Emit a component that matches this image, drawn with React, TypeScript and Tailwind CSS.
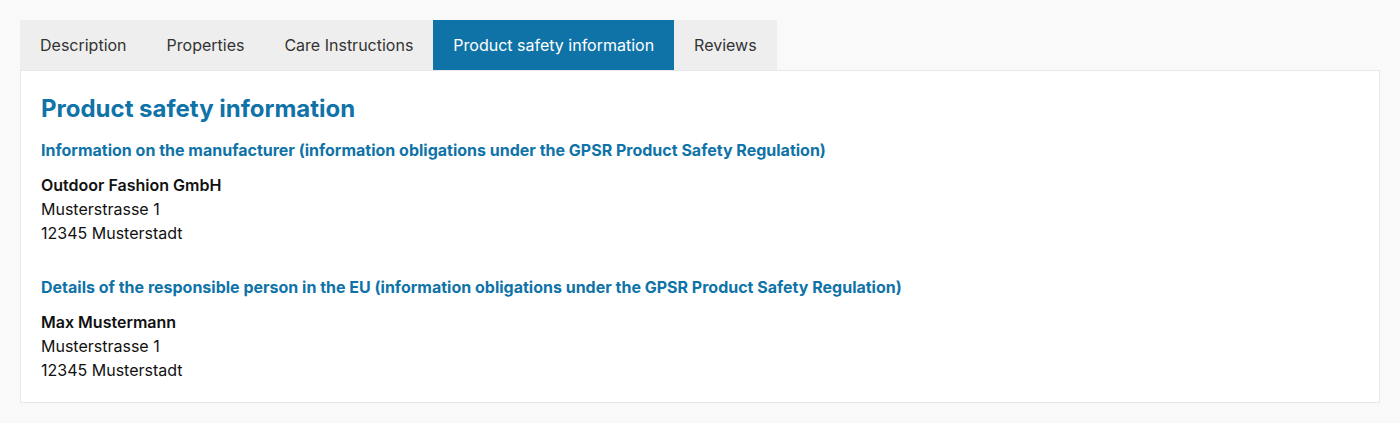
import React from "react";

const tabs = ["Description", "Properties", "Care Instructions", "Product safety information", "Reviews"];

export default function App() {
  return (
    <div className="min-h-[423px] bg-[#f9f9f9] px-5 pt-5" style={{ fontFamily: "Inter, 'Noto Sans', sans-serif" }}>
      <div className="flex">
        {tabs.map((t) => {
          const active = t === "Product safety information";
          return (
            <div
              key={t}
              className={
                "h-[50px] flex items-center px-5 text-[16px] " +
                (active ? "bg-[#0f73a8] text-white" : "bg-[#eeeeee] text-[#333333]")
              }
            >
              {t}
            </div>
          );
        })}
      </div>
      <div className="bg-white border border-[#e8e8e8] px-5 pt-[22px] pb-[20px] text-[16px] leading-6 text-[#111111]">
        <h2 className="text-[24px] font-bold leading-8 text-[#0f73a8]">Product safety information</h2>
        <h3 className="mt-[13px] text-[16px] font-bold leading-6 text-[#0f73a8]">
          Information on the manufacturer (information obligations under the GPSR Product Safety Regulation)
        </h3>
        <div className="mt-[11px]">
          <div className="font-semibold">Outdoor Fashion GmbH</div>
          <div>Musterstrasse 1</div>
          <div>12345 Musterstadt</div>
        </div>
        <h3 className="mt-[30px] text-[16px] font-bold leading-6 text-[#0f73a8]">
          Details of the responsible person in the EU (information obligations under the GPSR Product Safety Regulation)
        </h3>
        <div className="mt-[11px]">
          <div className="font-semibold">Max Mustermann</div>
          <div>Musterstrasse 1</div>
          <div>12345 Musterstadt</div>
        </div>
      </div>
    </div>
  );
}
